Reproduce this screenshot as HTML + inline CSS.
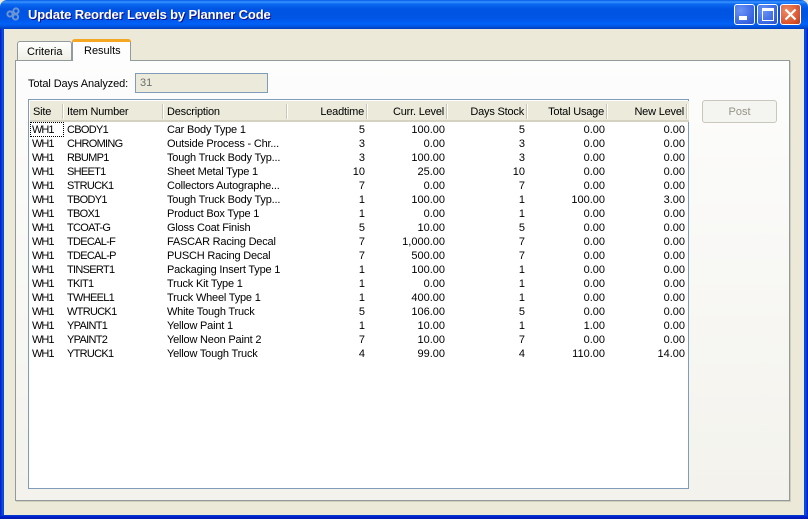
<!DOCTYPE html>
<html><head><meta charset="utf-8"><style>
*{box-sizing:border-box}
html,body{margin:0;padding:0;width:808px;height:519px;overflow:hidden;background:#ece9d8;font-family:"Liberation Sans",sans-serif;font-size:11px;color:#000}
.a{position:absolute}
#tb{left:0;top:0;width:808px;height:29px;background:linear-gradient(180deg,#0058e6 0,#3a93ff 2px,#0a6af0 4px,#0054e3 9px,#0055e5 18px,#0062f8 24px,#0050d8 27px,#003dc0 29px);border-radius:7px 7px 0 0}
#ttl{left:28px;top:7px;color:#fff;font-weight:bold;font-size:13px;letter-spacing:-.14px;white-space:nowrap;text-shadow:1px 1px 0 #0f1089}
.bl{top:29px;width:4px;height:490px;background:linear-gradient(90deg,#0019cf,#0831d9,#0855dd,#0443c8)}
#bb{left:0;top:515px;width:808px;height:4px;background:linear-gradient(180deg,#0443c8,#0019cf,#001ea0)}
.wb{top:4px;width:21px;height:21px;border:1px solid #fff;border-radius:3px;background:radial-gradient(circle at 30% 30%,#6c94f4,#3c68e4 65%,#2a50cc)}
#pane{left:15px;top:60px;width:775px;height:441px;border:1px solid #919b9c;box-shadow:1px 1px 0 #d0cdbc;background:linear-gradient(180deg,#fdfdfd 0,#f3f2ec 100%)}
.tab{border:1px solid #919b9c;border-bottom:none;border-radius:3px 3px 0 0}
#field{left:135px;top:73px;width:133px;height:20px;border:1px solid #7f9db9;background:#ebeadb;color:#6e6e6e;padding:3px 4px;line-height:12px}
#tbl{left:28px;top:99px;width:661px;height:390px;border:1px solid #7f9db9;background:#fff}
#hd{left:1px;top:1px;width:659px;height:21px;background:#ebeadb;border-bottom:2px solid #d6d2c2}
.h{top:5px;line-height:12px;white-space:nowrap;letter-spacing:-.2px}
.s{top:3px;width:2px;height:15px;background:linear-gradient(90deg,#cbc7b8 50%,#fff 50%)}
.row{position:absolute;left:0;width:659px;height:14px;line-height:14px;white-space:nowrap}
.row span{position:absolute;top:0}
.row span:nth-child(1){left:3px;letter-spacing:-1px}
.row span:nth-child(2){left:38px;letter-spacing:-.7px}
.row span:nth-child(3){left:138px;letter-spacing:-.2px}
.row span:nth-child(4){right:323px}
.row span:nth-child(5){right:243px}
.row span:nth-child(6){right:163px}
.row span:nth-child(7){right:83px}
.row span:nth-child(8){right:3px}
#post{left:702px;top:100px;width:75px;height:23px;border:1px solid #c9c7ba;border-radius:3px;background:#f4f4f0;color:#949485;text-align:center;line-height:22px}
</style></head><body>
<div class="a" id="tb"></div>
<svg class="a" style="left:5px;top:6px" width="18" height="18" viewBox="0 0 18 18" fill="none" stroke="#6a96d4" stroke-width="2"><circle cx="5" cy="8" r="2.6"/><circle cx="11" cy="5" r="2.6"/><circle cx="10.5" cy="11" r="2.6"/></svg>
<div class="a" id="ttl">Update Reorder Levels by Planner Code</div>
<div class="a wb" style="left:734px"><div class="a" style="left:4px;top:11px;width:8px;height:4px;background:#fff"></div></div>
<div class="a wb" style="left:757px"><div class="a" style="left:4px;top:3px;width:12px;height:13px;border:1px solid #fff;border-top-width:3px"></div></div>
<div class="a wb" style="left:780px;background:radial-gradient(circle at 30% 30%,#ee8a66,#d9532a 70%,#b83a18)"><svg class="a" style="left:3px;top:3px" width="13" height="13" viewBox="0 0 13 13" stroke="#fff" stroke-width="2.2"><path d="M1.5 1.5L11.5 11.5M11.5 1.5L1.5 11.5"/></svg></div>
<div class="a bl" style="left:0"></div><div class="a bl" style="left:804px;transform:scaleX(-1)"></div><div class="a" id="bb"></div>
<div class="a" id="pane"></div>
<div class="a tab" style="left:17px;top:41px;width:55px;height:19px;background:linear-gradient(180deg,#fff,#f0efe6)"><div class="a" style="left:9px;top:3px;line-height:14px">Criteria</div></div>
<div class="a tab" style="left:72px;top:39px;width:59px;height:22px;background:#fdfdfd;border-top:none;z-index:2"><div style="height:3px;margin:0 -1px;background:#f5a623;border-radius:3px 3px 0 0"></div><div class="a" style="left:11px;top:5px;line-height:14px">Results</div></div>
<div class="a" style="left:28px;top:77px;line-height:14px;white-space:nowrap;letter-spacing:-.1px">Total Days Analyzed:</div>
<div class="a" id="field">31</div>
<div class="a" id="post">Post</div>
<div class="a" id="tbl">
<div class="a" id="hd">
<div class="a h" style="left:3px">Site</div><div class="a s" style="left:32px"></div>
<div class="a h" style="left:37px">Item Number</div><div class="a s" style="left:132px"></div>
<div class="a h" style="left:137px">Description</div><div class="a s" style="left:256px"></div>
<div class="a h" style="right:325px">Leadtime</div><div class="a s" style="left:336px"></div>
<div class="a h" style="right:245px">Curr. Level</div><div class="a s" style="left:416px"></div>
<div class="a h" style="right:165px">Days Stock</div><div class="a s" style="left:496px"></div>
<div class="a h" style="right:85px">Total Usage</div><div class="a s" style="left:576px"></div>
<div class="a h" style="right:5px">New Level</div><div class="a s" style="left:656px"></div>
</div>
<div class="a" style="left:1px;top:22px;width:34px;height:15px;border:1px dotted #000"></div>
<div class="row" style="top:23px"><span>WH1</span><span>CBODY1</span><span>Car Body Type 1</span><span>5</span><span>100.00</span><span>5</span><span>0.00</span><span>0.00</span></div>
<div class="row" style="top:37px"><span>WH1</span><span>CHROMING</span><span>Outside Process - Chr...</span><span>3</span><span>0.00</span><span>3</span><span>0.00</span><span>0.00</span></div>
<div class="row" style="top:51px"><span>WH1</span><span>RBUMP1</span><span>Tough Truck Body Typ...</span><span>3</span><span>100.00</span><span>3</span><span>0.00</span><span>0.00</span></div>
<div class="row" style="top:65px"><span>WH1</span><span>SHEET1</span><span>Sheet Metal Type 1</span><span>10</span><span>25.00</span><span>10</span><span>0.00</span><span>0.00</span></div>
<div class="row" style="top:79px"><span>WH1</span><span>STRUCK1</span><span>Collectors Autographe...</span><span>7</span><span>0.00</span><span>7</span><span>0.00</span><span>0.00</span></div>
<div class="row" style="top:93px"><span>WH1</span><span>TBODY1</span><span>Tough Truck Body Typ...</span><span>1</span><span>100.00</span><span>1</span><span>100.00</span><span>3.00</span></div>
<div class="row" style="top:107px"><span>WH1</span><span>TBOX1</span><span>Product Box Type 1</span><span>1</span><span>0.00</span><span>1</span><span>0.00</span><span>0.00</span></div>
<div class="row" style="top:121px"><span>WH1</span><span>TCOAT-G</span><span>Gloss Coat Finish</span><span>5</span><span>10.00</span><span>5</span><span>0.00</span><span>0.00</span></div>
<div class="row" style="top:135px"><span>WH1</span><span>TDECAL-F</span><span>FASCAR Racing Decal</span><span>7</span><span>1,000.00</span><span>7</span><span>0.00</span><span>0.00</span></div>
<div class="row" style="top:149px"><span>WH1</span><span>TDECAL-P</span><span>PUSCH Racing Decal</span><span>7</span><span>500.00</span><span>7</span><span>0.00</span><span>0.00</span></div>
<div class="row" style="top:163px"><span>WH1</span><span>TINSERT1</span><span>Packaging Insert Type 1</span><span>1</span><span>100.00</span><span>1</span><span>0.00</span><span>0.00</span></div>
<div class="row" style="top:177px"><span>WH1</span><span>TKIT1</span><span>Truck Kit Type 1</span><span>1</span><span>0.00</span><span>1</span><span>0.00</span><span>0.00</span></div>
<div class="row" style="top:191px"><span>WH1</span><span>TWHEEL1</span><span>Truck Wheel Type 1</span><span>1</span><span>400.00</span><span>1</span><span>0.00</span><span>0.00</span></div>
<div class="row" style="top:205px"><span>WH1</span><span>WTRUCK1</span><span>White Tough Truck</span><span>5</span><span>106.00</span><span>5</span><span>0.00</span><span>0.00</span></div>
<div class="row" style="top:219px"><span>WH1</span><span>YPAINT1</span><span>Yellow Paint 1</span><span>1</span><span>10.00</span><span>1</span><span>1.00</span><span>0.00</span></div>
<div class="row" style="top:233px"><span>WH1</span><span>YPAINT2</span><span>Yellow Neon Paint 2</span><span>7</span><span>10.00</span><span>7</span><span>0.00</span><span>0.00</span></div>
<div class="row" style="top:247px"><span>WH1</span><span>YTRUCK1</span><span>Yellow Tough Truck</span><span>4</span><span>99.00</span><span>4</span><span>110.00</span><span>14.00</span></div>
</div>
</body></html>
